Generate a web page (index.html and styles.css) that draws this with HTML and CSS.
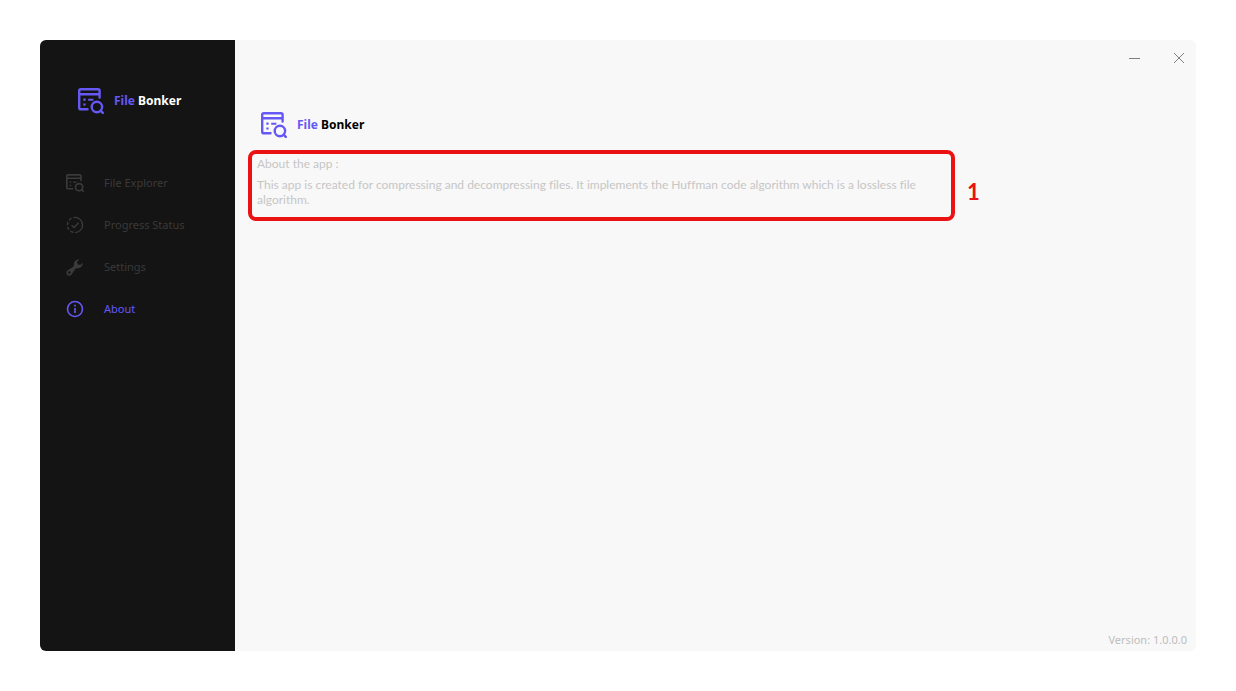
FILE: index.html
```html
<!DOCTYPE html>
<html lang="en">
<head>
<meta charset="utf-8">
<title>File Bonker</title>
<link rel="stylesheet" href="styles.css">
</head>
<body>
<svg class="defs" width="0" height="0" aria-hidden="true">
  <symbol id="file-search" viewBox="0 0 26 26">
    <g fill="none" stroke="currentColor" stroke-width="2.4" stroke-linecap="round" stroke-linejoin="round">
      <path d="M9.5 21.3H2.8Q1.2 21.3 1.2 19.7V2.8Q1.2 1.2 2.8 1.2H20Q21.6 1.2 21.6 2.8V9.5M1.2 6.2H21.6"/>
      <circle cx="18.9" cy="19" r="5.2"/>
      <path d="M22.6 22.6L24.8 24.8"/>
      <path d="M10.2 11.7H15.4" stroke-linecap="butt" stroke-width="2"/>
    </g>
    <path fill="currentColor" d="M5.3 10.6h2.3v2.2H5.3zM5.3 15.4h2.3v2.2H5.3z"/>
  </symbol>
</svg>
<div class="window">
  <aside class="sidebar">
    <div class="brand brand-dark">
      <svg class="logo"><use href="#file-search"/></svg>
      <span class="name"><span class="accent">File</span> Bonker</span>
    </div>
    <nav class="menu">
      <a class="item" href="#explorer">
        <svg class="icon"><use href="#file-search"/></svg><span class="label">File Explorer</span>
      </a>
      <a class="item" href="#progress">
        <svg class="icon" viewBox="0 0 18 18" fill="none" stroke="currentColor" stroke-width="1.4">
          <path d="M9 1.4A7.6 7.6 0 0 1 9 16.6"/>
          <path d="M9 16.6A7.6 7.6 0 0 1 9 1.4" stroke-dasharray="3.4 1.7" stroke-dashoffset="-1.5"/>
          <path d="M5.6 9.2L8 11.6L12.6 6.8"/>
        </svg><span class="label">Progress Status</span>
      </a>
      <a class="item" href="#settings">
        <svg class="icon" viewBox="0 0 18 18">
          <path fill="currentColor" fill-rule="evenodd" d="M13.6 1.6A4.6 4.6 0 0 0 7.9 6.8L7.6 8.5L2.2 12.1A2.9 2.9 0 1 0 5.8 16.2L9.6 10.4L11.6 10.2A4.6 4.6 0 0 0 16.6 4.8L14.2 7L11.6 6.3L11 3.8ZM3.4 13.2A1.3 1.3 0 1 1 3.3 15.8A1.3 1.3 0 0 1 3.4 13.2Z"/>
        </svg><span class="label">Settings</span>
      </a>
      <a class="item active" href="#about" aria-current="page">
        <svg class="icon" viewBox="0 0 18 18" fill="none" stroke="currentColor" stroke-width="1.6">
          <circle cx="9" cy="9" r="7.5"/>
          <path d="M9 8V13M9 4.8V6.5"/>
        </svg><span class="label">About</span>
      </a>
    </nav>
  </aside>
  <main class="content">
    <header class="titlebar">
      <button class="control" type="button" aria-label="Minimize">
        <svg viewBox="0 0 12 12"><path d="M0 6.5H11"/></svg>
      </button>
      <button class="control" type="button" aria-label="Close">
        <svg viewBox="0 0 12 12"><path d="M1 1L11 11M11 1L1 11"/></svg>
      </button>
    </header>
    <div class="brand brand-light">
      <svg class="logo"><use href="#file-search"/></svg>
      <span class="name"><span class="accent">File</span> Bonker</span>
    </div>
    <div class="callout">
      <section class="about">
        <p>About the app :</p>
        <p>This app is created for compressing and decompressing files. It implements the Huffman code algorithm which is a lossless file algorithm.</p>
      </section>
      <span class="marker">1</span>
    </div>
    <footer class="version">Version: 1.0.0.0</footer>
  </main>
</div>
</body>
</html>
```
FILE: styles.css
```css
* { box-sizing: border-box; }

body {
  margin: 0;
  min-height: 100vh;
  padding: 40px;
  display: flex;
  background: #fff;
  font: 11px/15px "Noto Sans", "Segoe UI", sans-serif;
}

.defs { position: absolute; }

.window {
  flex: 1;
  display: flex;
  border-radius: 6px;
  overflow: hidden;
  background: #f8f8f8;
}

.sidebar {
  width: 195px;
  flex: none;
  padding-top: 48px;
  background: #141414;
}

.brand {
  display: flex;
  align-items: center;
  gap: 10px;
  font-size: 12px;
  font-weight: 700;
}
.brand-dark { padding-left: 38px; color: #fff; }
.brand-light { padding-left: 26px; margin-top: 36px; color: #000; }
.name, .label { padding-bottom: 2px; }
.accent { color: #6558f5; }
.logo { width: 26px; height: 26px; color: #6558f5; }

.menu { margin-top: 48px; }
.item {
  height: 42px;
  padding-left: 26px;
  display: flex;
  align-items: center;
  gap: 20px;
  color: #3a3a3a;
  text-decoration: none;
}
.item.active { color: #6558f5; }
.icon { width: 18px; height: 18px; }

.content {
  flex: 1;
  display: flex;
  flex-direction: column;
}

.titlebar {
  display: flex;
  justify-content: flex-end;
}
.control {
  width: 45px;
  height: 36px;
  padding: 0;
  display: flex;
  align-items: center;
  justify-content: center;
  border: 0;
  background: none;
}
.control:last-child { width: 34px; margin-left: 5px; }
.control svg {
  width: 12px;
  height: 12px;
  fill: none;
  stroke: #808080;
  stroke-width: 1;
}

.callout {
  display: flex;
  align-items: center;
  gap: 12px;
  margin: 12px 0 0 13px;
}
.about {
  width: 707px;
  padding: 2px 5px 10px;
  border: 4px solid #ea1212;
  border-radius: 8px;
  color: #c6c6c6;
  font: 12px/15px Lato, "Segoe UI", sans-serif;
  font-variant-ligatures: none;
}
.about p { margin: 0; }
.about p + p { margin-top: 6px; }
.marker {
  padding-top: 12px;
  color: #ea1212;
  font: 700 22px/24px Lato, sans-serif;
}

.version {
  margin-top: auto;
  padding: 0 9px 4px;
  text-align: right;
  color: #bdbdbd;
}
```
